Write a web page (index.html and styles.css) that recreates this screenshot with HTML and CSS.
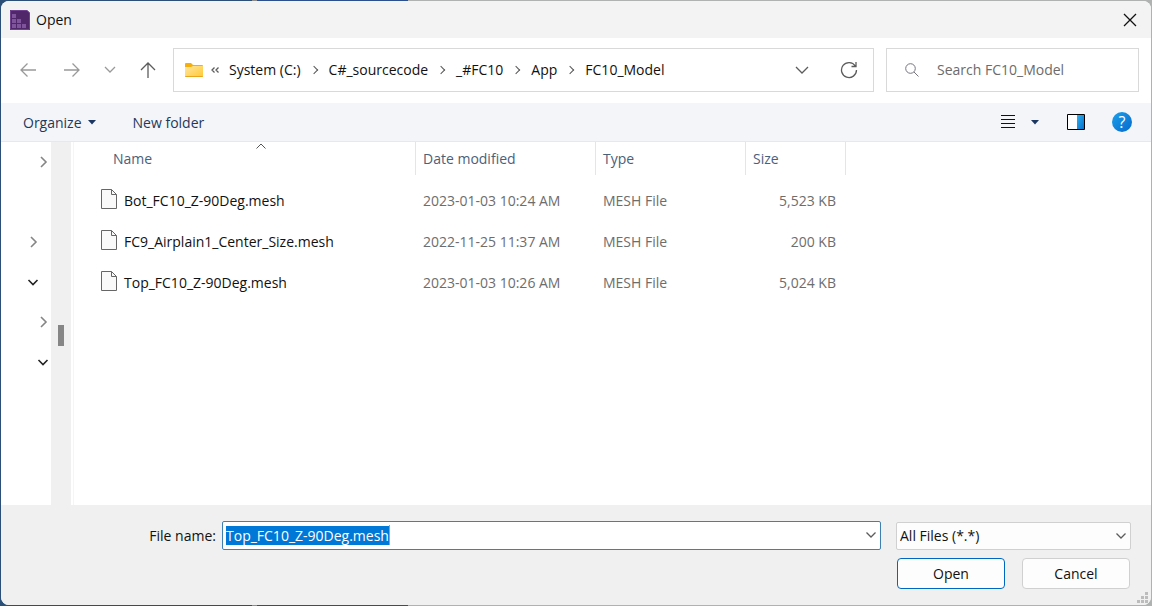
FILE: index.html
```html
<!DOCTYPE html>
<html lang="en">
<head>
<meta charset="utf-8">
<title>Open</title>
<link rel="stylesheet" href="styles.css">
</head>
<body>
<main class="dialog">
  <header class="titlebar">
    <svg class="app-icon" width="20" height="20" viewBox="0 0 20 20" aria-hidden="true">
      <path d="M0 0h17l3 3v17H0z" fill="#50286a"/>
      <path d="M.5 .5H17L19.500 3V19.500H.5z" fill="none" stroke="#70418e"/>
      <path d="M2 4h4v4H2zM2 9h4v4H2zM7 9h4v4H7zM2 14h4v4H2zM7 14h4v4H7zM12 14h4v4h-4z" fill="#80549b"/>
    </svg>
    <h1 class="title">Open</h1>
    <button class="icon-button close" aria-label="Close">
      <svg width="14" height="14" viewBox="0 0 14 14"><path d="M1 1l12 12M13 1L1 13" stroke="#111" stroke-width="1.300"/></svg>
    </button>
  </header>

  <nav class="navbar" aria-label="Location">
    <div class="history">
      <button class="icon-button" aria-label="Back"><svg width="16" height="16" viewBox="0 0 16 16"><path class="line faint" d="M16 8H1M7.500 1.500L1 8l6.500 6.500"/></svg></button>
      <button class="icon-button" aria-label="Forward"><svg width="16" height="16" viewBox="0 0 16 16"><path class="line faint" d="M0 8h15M8.500 1.500L15 8l-6.500 6.500"/></svg></button>
      <button class="icon-button" aria-label="Recent locations"><svg width="12" height="16" viewBox="0 0 12 16"><path class="line faint" d="M1 5l5 5 5-5"/></svg></button>
      <button class="icon-button" aria-label="Up"><svg width="16" height="18" viewBox="0 0 16 18"><path class="line dark" d="M8 17V2M1 9l7-7 7 7"/></svg></button>
    </div>
    <div class="address">
      <svg class="folder" width="18" height="14" viewBox="0 0 18 14" aria-hidden="true">
        <defs><linearGradient id="folder" x2="1" y2="1"><stop stop-color="#ffe7a0"/><stop offset="1" stop-color="#ffc933"/></linearGradient></defs>
        <path d="M0 1q0-1 1-1h5l2 2h9q1 0 1 1v5H0z" fill="#f5ae0b"/>
        <path d="M0 4h6l2-1h10v10q0 1-1 1H1q-1 0-1-1z" fill="url(#folder)"/>
        <path d="M0 13h18q0 1-1 1H1q-1 0-1-1z" fill="#e9a51c"/>
      </svg>
      <svg class="more" width="8" height="8" viewBox="0 0 8 8" aria-hidden="true"><path class="line dark" d="M3.500 1.500L1 4l2.500 2.500M7.500 1.500L5 4l2.500 2.500"/></svg>
      <ol class="crumbs">
        <li><a href="#">System (C:)</a></li>
        <li><a href="#">C#_sourcecode</a></li>
        <li><a href="#">_#FC10</a></li>
        <li><a href="#">App</a></li>
        <li><a href="#">FC10_Model</a></li>
      </ol>
      <button class="icon-button history-toggle" aria-label="Previous locations"><svg width="14" height="8" viewBox="0 0 14 8"><path class="line dark" d="M1 1l6 6 6-6"/></svg></button>
      <button class="icon-button refresh" aria-label="Refresh"><svg width="18" height="18" viewBox="0 0 18 18"><path class="line dark" d="M15.300 5A7.500 7.500 0 1 0 16.500 9M11.500 5.500h4.500V1"/></svg></button>
    </div>
    <div class="search">
      <svg width="14" height="14" viewBox="0 0 14 14" aria-hidden="true"><circle cx="5.500" cy="5.500" r="4.800" fill="none" stroke="#74747e"/><path d="M9 9l4.500 4.500" stroke="#74747e"/></svg>
      <input class="search-input" type="text" aria-label="Search FC10_Model" placeholder="Search FC10_Model">
    </div>
  </nav>

  <div class="toolbar">
    <button class="command">Organize <svg width="8" height="5" viewBox="0 0 8 5" aria-hidden="true"><path d="M0 0h8L4 4.500z" fill="#1b3661"/></svg></button>
    <button class="command">New folder</button>
    <div class="view-tools">
      <button class="icon-button" aria-label="View"><svg width="16" height="16" viewBox="0 0 16 16"><path d="M1 1.500h14M1 5.500h14M1 9.500h14M1 13.500h14" stroke="#111"/></svg></button>
      <button class="icon-button view-more" aria-label="More views"><svg width="8" height="5" viewBox="0 0 8 5"><path d="M0 0h8L4 4.500z" fill="#1b3661"/></svg></button>
      <button class="icon-button pane" aria-label="Preview pane"><svg width="18" height="16" viewBox="0 0 18 16">
        <defs><linearGradient id="pane" x2="1" y2="1"><stop stop-color="#2fb1f1"/><stop offset="1" stop-color="#0670cd"/></linearGradient></defs>
        <path d="M.5 .5h17v15H.5z" fill="#fff"/><path d="M10 1h7v14h-7z" fill="url(#pane)"/><path d="M.5 .5h17v15H.5z" fill="none" stroke="#000"/></svg></button>
      <button class="help" aria-label="Help">?</button>
    </div>
  </div>

  <section class="content">
    <div class="tree">
      <button class="node deep" aria-label="Expand"><svg width="12" height="12" viewBox="0 0 12 12"><path class="line twisty" d="M4 1l5 5-5 5"/></svg></button>
      <span class="node"></span>
      <button class="node" aria-label="Expand"><svg width="12" height="12" viewBox="0 0 12 12"><path class="line twisty" d="M4 1l5 5-5 5"/></svg></button>
      <button class="node" aria-label="Collapse"><svg width="12" height="12" viewBox="0 0 12 12"><path class="line twisty open" d="M1.500 4L6 8.500 10.500 4"/></svg></button>
      <button class="node deep" aria-label="Expand"><svg width="12" height="12" viewBox="0 0 12 12"><path class="line twisty" d="M4 1l5 5-5 5"/></svg></button>
      <button class="node deep" aria-label="Collapse"><svg width="12" height="12" viewBox="0 0 12 12"><path class="line twisty open" d="M1.500 4L6 8.500 10.500 4"/></svg></button>
    </div>
    <div class="scrollbar"><div class="thumb"></div></div>
    <div class="files">
      <table class="file-table">
        <colgroup><col class="col-name"><col class="col-date"><col class="col-type"><col class="col-size"></colgroup>
        <thead>
          <tr>
            <th scope="col" aria-sort="ascending">Name<svg class="sort" width="10" height="6" viewBox="0 0 10 6" aria-hidden="true"><path d="M.5 5.500L5 1l4.500 4.500" fill="none" stroke="#555"/></svg></th>
            <th scope="col">Date modified</th>
            <th scope="col">Type</th>
            <th scope="col">Size</th>
          </tr>
        </thead>
        <tbody>
          <tr>
            <td><span class="file"><svg class="file-icon" width="16" height="20" viewBox="0 0 16 20" aria-hidden="true"><path d="M.5 .5h10l5 5v14H.5z" fill="#f9f9fa" stroke="#666"/><path d="M10.500 .5v5h5" fill="none" stroke="#666"/></svg>Bot_FC10_Z-90Deg.mesh</span></td>
            <td>2023-01-03 10:24 AM</td><td>MESH File</td><td>5,523 KB</td>
          </tr>
          <tr>
            <td><span class="file"><svg class="file-icon" width="16" height="20" viewBox="0 0 16 20" aria-hidden="true"><path d="M.5 .5h10l5 5v14H.5z" fill="#f9f9fa" stroke="#666"/><path d="M10.500 .5v5h5" fill="none" stroke="#666"/></svg>FC9_Airplain1_Center_Size.mesh</span></td>
            <td>2022-11-25 11:37 AM</td><td>MESH File</td><td>200 KB</td>
          </tr>
          <tr>
            <td><span class="file"><svg class="file-icon" width="16" height="20" viewBox="0 0 16 20" aria-hidden="true"><path d="M.5 .5h10l5 5v14H.5z" fill="#f9f9fa" stroke="#666"/><path d="M10.500 .5v5h5" fill="none" stroke="#666"/></svg>Top_FC10_Z-90Deg.mesh</span></td>
            <td>2023-01-03 10:26 AM</td><td>MESH File</td><td>5,024 KB</td>
          </tr>
        </tbody>
      </table>
    </div>
  </section>

  <footer class="footer">
    <div class="fields">
      <label class="field-label" for="file-name">File name:</label>
      <div class="combo">
        <input class="name-input" id="file-name" type="text" value="Top_FC10_Z-90Deg.mesh" spellcheck="false">
        <span class="caret"></span>
        <svg class="drop" width="10" height="6" viewBox="0 0 10 6" aria-hidden="true"><path class="line dark" d="M.5 .5L5 5 9.500 .5"/></svg>
      </div>
      <div class="filter">
        <select class="filter-select" aria-label="File type"><option>All Files (*.*)</option></select>
        <svg class="drop" width="10" height="6" viewBox="0 0 10 6" aria-hidden="true"><path class="line dark" d="M.5 .5L5 5 9.500 .5"/></svg>
      </div>
    </div>
    <div class="actions">
      <button class="button primary">Open</button>
      <button class="button">Cancel</button>
    </div>
    <svg class="grip" width="11" height="11" viewBox="0 0 11 11" aria-hidden="true"><path d="M8 0h3v3H8zM4 4h3v3H4zM8 4h3v3H8zM0 8h3v3H0zM4 8h3v3H4zM8 8h3v3H8z" fill="#bcbcbc"/></svg>
  </footer>
</main>
<script src="script.js"></script>
</body>
</html>
```
FILE: styles.css
```css
* { box-sizing: border-box; }

body {
  margin: 0;
  background: linear-gradient(90deg, #2c4f78 0 252px, #8d8d8d 252px 257px, #2a4f8c 257px 408px, #b0b2b2 408px);
  color: #111;
  font: 14px/20px "Open Sans", "Noto Sans", sans-serif;
}

button, input, select {
  font: inherit;
  color: inherit;
}

button {
  padding: 0;
  border: 0;
  background: none;
}

svg { display: block; flex: none; }

.dialog {
  display: flex;
  flex-direction: column;
  min-height: 100vh;
  border: 1px solid transparent;
  border-radius: 9px;
  overflow: hidden;
  background: #fff padding-box;
}

.icon-button {
  display: grid;
  place-items: center;
}

.line { fill: none; stroke-width: 1.3; }
.faint { stroke: #999; }
.dark { stroke: #5c5c5c; }
.twisty { stroke: #858585; stroke-width: 1.6; }
.twisty.open { stroke: #222; }

.titlebar {
  display: flex;
  align-items: center;
  height: 37px;
  padding: 0 14px 0 9px;
  background: #f3f3f3;
}

.title {
  margin: 0 auto 0 6px;
  font-size: 14px;
  font-weight: 400;
}

.navbar {
  display: flex;
  align-items: center;
  gap: 12px;
  height: 65px;
  padding: 0 12px 2px 19px;
}

.history {
  display: flex;
  align-items: center;
  gap: 24px;
  width: 141px;
}

.history .icon-button:nth-child(1) { margin-right: 4px; }

.address {
  display: flex;
  flex: 1;
  align-items: center;
  height: 44px;
  padding: 0 15px 0 11px;
  border: 1px solid #d9d9d9;
}

.more { margin-left: 8px; }

.crumbs {
  display: flex;
  margin: 0 auto 0 10px;
  padding: 0;
  list-style: none;
}

.crumbs li { display: flex; align-items: center; }

.crumbs li + li::before {
  content: "";
  width: 5px;
  height: 5px;
  margin: 0 12px 0 10px;
  border: solid #555;
  border-width: 1px 1px 0 0;
  transform: rotate(45deg);
}

.crumbs a { color: inherit; text-decoration: none; }

.refresh { margin-left: 31px; }

.search {
  display: flex;
  align-items: center;
  gap: 18px;
  width: 253px;
  height: 44px;
  padding: 0 18px;
  border: 1px solid #d9d9d9;
}

.search-input {
  flex: 1;
  min-width: 0;
  padding: 0;
  border: 0;
  outline: 0;
  background: none;
}

.search-input::placeholder { color: #6b6b6b; opacity: 1; }

.toolbar {
  display: flex;
  align-items: center;
  gap: 37px;
  height: 39px;
  padding: 0 19px 0 22px;
  border-bottom: 1px solid #e6e8ea;
  background: #f4f5f8;
  color: #1e395b;
}

.command {
  display: flex;
  align-items: center;
  gap: 6px;
  padding-top: 1px;
}

.view-tools {
  display: flex;
  align-items: center;
  margin-left: auto;
}

.view-more { margin: 0 28px 0 15px; }

.pane { margin-right: 27px; }

.help {
  width: 20px;
  height: 20px;
  border-radius: 50%;
  background: linear-gradient(135deg, #1ba1ec, #0668cb);
  color: #fff;
  font-size: 16px;
  line-height: 20px;
}

.content {
  display: flex;
  flex: 1;
}

.tree {
  display: flex;
  flex-direction: column;
  width: 50px;
}

.node {
  height: 40px;
  padding-left: 26px;
}

.node.deep { padding-left: 36px; }

.scrollbar {
  width: 20px;
  padding: 183px 7px 0;
  background: #f0f0f0;
}

.thumb {
  height: 21px;
  background: #868686;
}

.files {
  flex: 1;
  margin-left: 2px;
  border-left: 1px solid #f5f5f5;
}

.file-table {
  table-layout: fixed;
  width: 772px;
  border-spacing: 0;
}

.col-name { width: 342px; }
.col-date { width: 180px; }
.col-type { width: 150px; }
.col-size { width: 100px; }

.file-table th {
  position: relative;
  height: 33px;
  padding: 0 7px;
  border-right: 1px solid #e5e5e5;
  color: #4c607a;
  font-weight: 400;
  text-align: left;
}

.file-table th:first-child { padding-left: 39px; }

.sort {
  position: absolute;
  top: 1px;
  left: 182px;
}

.file-table tbody::before {
  content: "";
  display: table-row;
  height: 5px;
}

.file-table td {
  height: 41px;
  padding: 0 7px;
  color: #6d6d6d;
}

.file-table td:first-child { padding-left: 27px; color: #111; }
.file-table td:last-child { padding-right: 10px; text-align: right; }

.file {
  display: flex;
  align-items: center;
  gap: 7px;
}

.file-icon { margin: -2px 0 2px; }

.footer {
  position: relative;
  display: flex;
  flex-direction: column;
  gap: 8px;
  padding: 16px 20px;
  background: #f0f0f0;
}

.fields { display: flex; align-items: center; }

.field-label {
  width: 195px;
  text-align: right;
}

.combo {
  position: relative;
  flex: 1;
  margin: 0 15px 0 6px;
}

.name-input {
  display: block;
  width: 100%;
  height: 29px;
  padding: 0 24px 0 3px;
  border: 1px solid #4080b0;
  border-radius: 2px;
  outline: 0;
  background: #fff;
}

.name-input::selection {
  background: #0078d7;
  color: #fff;
}

.caret {
  position: absolute;
  top: 4px;
  left: 167px;
  width: 1px;
  height: 20px;
  background: #ff8728;
}

.filter {
  position: relative;
  width: 235px;
}

.filter-select {
  display: block;
  width: 100%;
  height: 28px;
  padding: 0 24px 0 3px;
  border: 1px solid #d0d0d0;
  border-radius: 2px;
  appearance: none;
  background: #fdfdfd;
}

.drop {
  position: absolute;
  top: 11px;
  right: 5px;
  pointer-events: none;
}

.actions {
  display: flex;
  justify-content: flex-end;
  gap: 17px;
  padding-right: 1px;
}

.button {
  width: 108px;
  height: 31px;
  border: 1px solid #d0d0d0;
  border-radius: 4px;
  background: #fdfdfd;
}

.button.primary { border-color: #0067c0; }

.grip {
  position: absolute;
  right: 3px;
  bottom: 2px;
}
```
FILE: script.js
```js
const nameInput = document.getElementById("file-name");
nameInput.focus();
nameInput.select();
```
